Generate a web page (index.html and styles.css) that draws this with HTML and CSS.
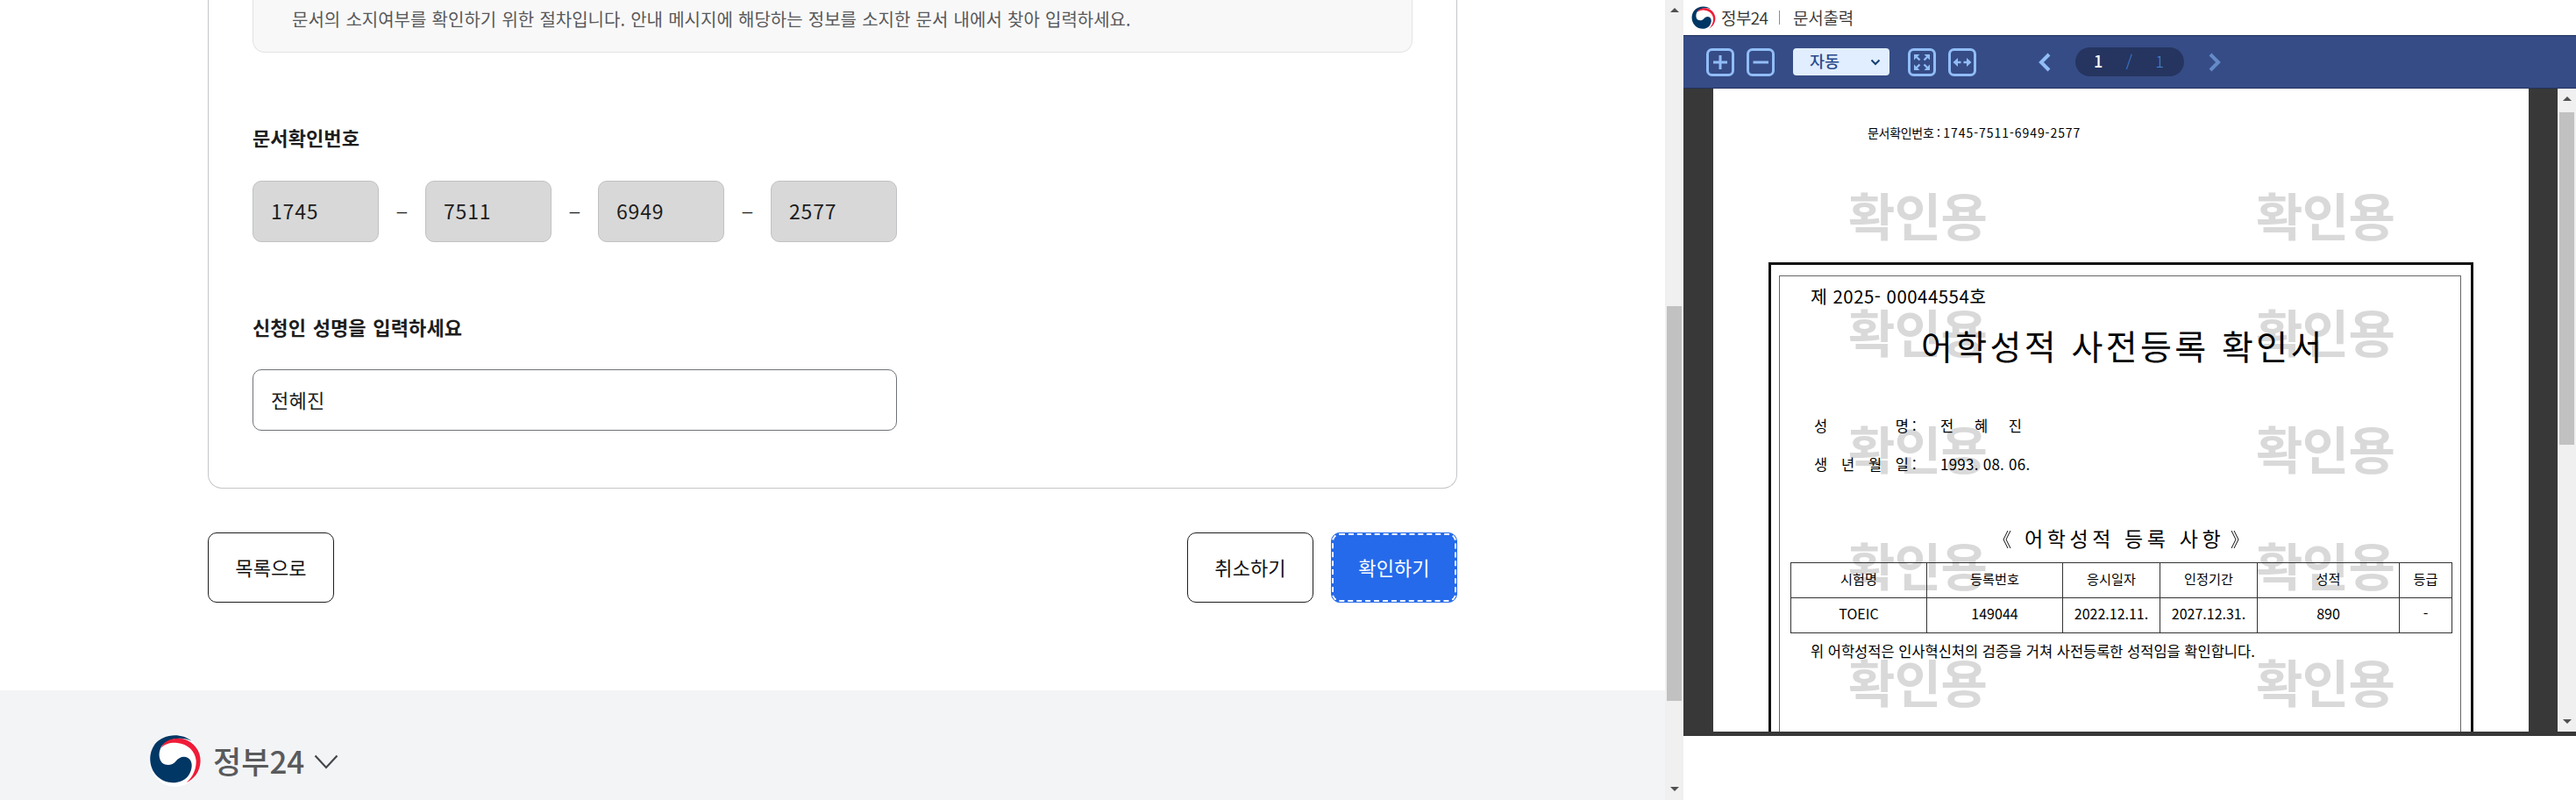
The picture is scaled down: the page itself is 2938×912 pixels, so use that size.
FILE: index.html
```html
<!DOCTYPE html>
<html lang="ko">
<head>
<meta charset="utf-8">
<title>정부24 문서출력</title>
<link rel="stylesheet" href="styles.css">
</head>
<body>
<svg class="defs" width="0" height="0" aria-hidden="true">
  <symbol id="gov-mark" viewBox="61 172 180 180">
    <circle cx="151" cy="262" r="89" fill="#fff"/>
    <path fill="#003764" d="M207 195C170 165 108 170 80 207C55 243 62 290 90 317C118 344 168 346 194 316C212 292 211 262 194 253C178 245 163 252 152 265C142 278 120 281 106 270C92 256 93 230 105 212C125 186 175 178 207 195Z"/>
    <path fill="#f01c38" d="M102 219C112 192 148 181 177 188C215 198 238 230 237 264C236 300 215 325 189 337C212 318 223 290 222 262C219 230 193 205 158 202C135 200 115 205 102 219Z"/>
  </symbol>
</svg>
<div class="screen">
  <div class="portal">
    <main class="portal-main">
      <section class="card">
        <p class="info">문서의 소지여부를 확인하기 위한 절차입니다. 안내 메시지에 해당하는 정보를 소지한 문서 내에서 찾아 입력하세요.</p>
        <h2 class="label">문서확인번호</h2>
        <div class="codes">
          <span class="field code">1745</span><span class="dash">–</span>
          <span class="field code">7511</span><span class="dash">–</span>
          <span class="field code">6949</span><span class="dash">–</span>
          <span class="field code">2577</span>
        </div>
        <h2 class="label label-name">신청인 성명을 입력하세요</h2>
        <div class="field name">전혜진</div>
      </section>
      <div class="actions">
        <button class="btn" type="button">목록으로</button>
        <div class="actions-right">
          <button class="btn" type="button">취소하기</button>
          <button class="btn primary" type="button">확인하기</button>
        </div>
      </div>
      <footer class="footer">
        <svg class="footer-mark"><use href="#gov-mark"/></svg>
        <span class="footer-name">정부24</span>
        <svg class="footer-chevron" viewBox="0 0 28 18"><path d="M1.5 1.5L14 15L26.500 1.500" fill="none" stroke="#444549" stroke-width="2.200"/></svg>
      </footer>
    </main>
    <div class="scrollbar main-scroll">
      <i class="arrow up"></i><i class="thumb"></i><i class="arrow down"></i>
    </div>
  </div>

  <div class="viewer">
    <header class="viewer-head">
      <svg class="head-mark"><use href="#gov-mark"/></svg>
      <span class="head-name">정부24</span>
      <span class="head-sep"></span>
      <span class="head-title">문서출력</span>
    </header>
    <div class="toolbar">
      <svg class="tool" viewBox="0 0 32 32"><rect class="tool-box" x="1.500" y="1.500" width="29" height="29" rx="5"/><path class="tool-line" d="M16 8V24M8 16H24"/></svg>
      <svg class="tool" viewBox="0 0 32 32"><rect class="tool-box" x="1.500" y="1.500" width="29" height="29" rx="5"/><path class="tool-line" d="M7.500 16H25"/></svg>
      <div class="zoom-select">
        <span>자동</span>
        <svg width="12" height="8" viewBox="0 0 12 8"><path d="M1.500 1.500L6 6L10.500 1.500" fill="none" stroke="#173f73" stroke-width="2"/></svg>
      </div>
      <svg class="tool" viewBox="0 0 32 32"><rect class="tool-box" x="1.500" y="1.500" width="29" height="29" rx="5"/><path class="tool-fill" d="M7 7H13.500L7 13.500ZM25 7V13.500L18.500 7ZM7 25V18.500L13.500 25ZM25 25H18.500L25 18.500Z"/><path class="tool-thin" d="M9 9L13.500 13.500M23 9L18.500 13.500M9 23L13.500 18.500M23 23L18.500 18.500"/></svg>
      <svg class="tool tool-fit" viewBox="0 0 32 32"><rect class="tool-box" x="1.500" y="1.500" width="29" height="29" rx="5"/><path class="tool-fill" d="M5.500 16L11 11V21ZM26.500 16L21 11V21Z"/><path class="tool-thin" d="M10 16H14.500M17.500 16H22"/></svg>
      <svg class="pager-arrow" viewBox="0 0 14 22"><path d="M12 2L3 11L12 20" fill="none" stroke="#91bdf7" stroke-width="4"/></svg>
      <div class="pager"><b>1</b><span>/</span><span>1</span></div>
      <svg class="pager-arrow" viewBox="0 0 14 22"><path d="M2 2L11 11L2 20" fill="none" stroke="#648bc7" stroke-width="4"/></svg>
    </div>
    <div class="canvas">
      <article class="page">
        <div class="marks">
          <span>확인용</span><span>확인용</span>
          <span>확인용</span><span>확인용</span>
          <span>확인용</span><span>확인용</span>
          <span>확인용</span><span>확인용</span>
          <span>확인용</span><span>확인용</span>
        </div>
        <p class="doc-no">문서확인번호 : <span>1745-7511-6949-2577</span></p>
        <div class="frame">
          <div class="frame-inner">
            <p class="serial">제 2025- 00044554호</p>
            <h1 class="doc-title">어학성적 사전등록 확인서</h1>
            <dl class="person">
              <dt><span>성</span><span>명</span></dt><dd class="colon">:</dd><dd class="person-name"><span>전</span><span>혜</span><span>진</span></dd>
              <dt><span>생</span><span>년</span><span>월</span><span>일</span></dt><dd class="colon">:</dd><dd class="birth">1993. 08. 06.</dd>
            </dl>
            <h3 class="subtitle"><svg class="bracket" viewBox="0 0 10 22"><path d="M6 1L1 11L6 21M9 1L4 11L9 21"/></svg><span>어학성적 등록 사항</span><svg class="bracket" viewBox="0 0 10 22"><path d="M1 1L6 11L1 21M4 1L9 11L4 21"/></svg></h3>
            <table class="scores">
              <colgroup><col class="c-test"><col class="c-no"><col class="c-date"><col class="c-term"><col class="c-score"><col class="c-grade"></colgroup>
              <tr><th>시험명</th><th>등록번호</th><th>응시일자</th><th>인정기간</th><th>성적</th><th>등급</th></tr>
              <tr><td>TOEIC</td><td>149044</td><td>2022.12.11.</td><td>2027.12.31.</td><td>890</td><td>-</td></tr>
            </table>
            <p class="statement">위 어학성적은 인사혁신처의 검증을 거쳐 사전등록한 성적임을 확인합니다.</p>
          </div>
        </div>
      </article>
      <div class="scrollbar doc-scroll">
        <i class="arrow up"></i><i class="thumb"></i><i class="arrow down"></i>
      </div>
    </div>
  </div>
</div>
</body>
</html>
```

FILE: styles.css
```css
* { box-sizing: border-box; margin: 0; padding: 0; }
body {
  width: 2938px;
  height: 912px;
  overflow: hidden;
  background: #fff;
  color: #1d1d1d;
  font-family: "Noto Sans CJK KR", "Noto Sans", sans-serif;
  white-space: nowrap;
}
svg { display: block; flex: none; }
.defs { position: absolute; }
.screen { display: flex; width: 2938px; height: 912px; }

/* portal */
.portal { display: flex; width: 1920px; height: 912px; }
.portal-main { display: flex; flex-direction: column; width: 1899px; }
.card {
  width: 1425px;
  height: 557px;
  margin-left: 237px;
  padding: 0 50px;
  border: 1px solid #c4c6c9;
  border-top: 0;
  border-radius: 0 0 16px 16px;
}
.info {
  height: 60px;
  padding: 10px 0 0 44px;
  border: 1px solid #e2e3e5;
  border-top: 0;
  border-radius: 0 0 14px 14px;
  background: #f8f8f8;
  color: #58595b;
  font-size: 20px;
  line-height: 24px;
  word-spacing: 0.6px;
}
.label {
  margin: 81px 0 35px;
  font-size: 22px;
  line-height: 30px;
  font-weight: 700;
  letter-spacing: 0.1px;
  word-spacing: 1.4px;
}
.label-name { margin-bottom: 34px; }
.codes { display: flex; width: 735px; }
.field {
  height: 70px;
  padding-left: 20px;
  border: 1px solid #6f7276;
  border-radius: 10px;
  font-size: 22px;
  line-height: 67px;
  letter-spacing: 0.2px;
}
.name { width: 735px; }
.code {
  width: 144px;
  border-color: #c0c1c3;
  background: #d8d8d8;
  font-size: 23px;
  line-height: 66px;
  letter-spacing: 0.8px;
}
.dash { width: 53px; text-align: center; font-size: 26px; font-weight: 300; line-height: 66px; }
.actions {
  display: flex;
  justify-content: space-between;
  width: 1425px;
  margin: 50px 0 100px 237px;
}
.actions-right { display: flex; gap: 20px; }
.btn {
  width: 144px;
  height: 80px;
  padding-bottom: 2px;
  border: 1px solid #1d1d1d;
  border-radius: 10px;
  background: #fff;
  color: #111;
  font-family: inherit;
  font-size: 22px;
  letter-spacing: 0.1px;
}
.primary {
  border-color: #256aea;
  background: #256aea;
  color: #fff;
  outline: 2px dashed #fff;
  outline-offset: -3px;
}
.footer {
  display: flex;
  height: 125px;
  padding: 50px 0 0 170px;
  background: #f2f4f6;
}
.footer-mark { width: 60px; height: 60px; }
.footer-name {
  width: 114px;
  margin-left: 13px;
  margin-right: 1px;
  color: #595a5c;
  font-size: 35px;
  font-weight: 500;
  line-height: 59px;
  letter-spacing: 0;
}
.footer-chevron { width: 28px; height: 18px; margin-top: 23px; }

/* scrollbars */
.scrollbar {
  display: flex;
  flex-direction: column;
  align-items: center;
  width: 21px;
  background: #f0f0f0;
}
.arrow { width: 0; height: 0; border: 5px solid transparent; }
.up { border-top: 0; border-bottom-color: #505050; }
.down { border-bottom: 0; border-top-color: #505050; margin-top: auto; }
.thumb { width: 17px; background: #c1c1c1; }
.main-scroll { height: 912px; padding: 9px 0 10px; }
.main-scroll .thumb { height: 450px; margin-top: 335px; }
.doc-scroll { height: 733px; padding: 9px 0; }
.doc-scroll .thumb { height: 379px; margin-top: 13px; }

/* viewer */
.viewer { width: 1018px; }
.viewer-head {
  display: flex;
  align-items: center;
  height: 40px;
  padding-left: 9px;
  color: #333;
  line-height: 24px;
}
.head-mark { width: 28px; height: 28px; margin-top: 1px; }
.head-name { width: 66px; margin-left: 6px; font-size: 19px; font-weight: 350; letter-spacing: -0.6px; }
.head-sep { width: 1px; height: 16px; background: #8d8d8d; }
.head-title { margin-left: 15px; font-size: 19px; font-weight: 350; letter-spacing: -0.2px; }
.toolbar {
  display: flex;
  align-items: center;
  height: 61px;
  padding-left: 26px;
  border-top: 1px solid #22325c;
  border-bottom: 1px solid #22325c;
  background: #364c86;
}
.tool { width: 32px; height: 32px; margin-right: 14px; }
.tool-box { fill: none; stroke: #91bdf7; stroke-width: 3; }
.tool-line { fill: none; stroke: #91bdf7; stroke-width: 3; }
.tool-thin { fill: none; stroke: #91bdf7; stroke-width: 2.4; }
.tool-fill { fill: #91bdf7; }
.zoom-select {
  display: flex;
  align-items: center;
  justify-content: space-between;
  width: 110px;
  height: 31px;
  margin: 0 21px 0 7px;
  padding: 0 10px 0 19px;
  border-radius: 4px;
  background: #e1eeff;
  color: #2d4a8a;
  font-size: 18.5px;
  font-weight: 500;
  line-height: 28px;
}
.zoom-select span { height: 31px; }
.tool-fit { margin-right: 71px; }
.pager-arrow { width: 14px; height: 22px; }
.pager {
  display: flex;
  justify-content: space-between;
  width: 124px;
  height: 33px;
  margin: 0 28px;
  padding: 0 23px 0 21px;
  border-radius: 17px;
  background: #253560;
  color: #4285dc;
  font-size: 18px;
  font-weight: 300;
  line-height: 30px;
}
.pager b { color: #fff; font-weight: 500; }
.canvas {
  display: flex;
  justify-content: space-between;
  height: 738px;
  padding: 0 0 5px 34px;
  background: #383838;
}

/* document */
.page {
  position: relative;
  width: 930px;
  height: 733px;
  padding: 40px 0 0 63px;
  overflow: hidden;
  background: #fff;
  color: #000;
}
.marks {
  position: absolute;
  left: 154px;
  top: 79px;
  display: grid;
  grid-template-columns: 465px 160px;
  grid-auto-rows: 133px;
  color: #d9d9d9;
  font-size: 58px;
  font-weight: 700;
  line-height: 128px;
  letter-spacing: -0.6px;
}
.doc-no, .frame { position: relative; }
.doc-no {
  height: 158px;
  padding-left: 113px;
  font-size: 14px;
  line-height: 20px;
  letter-spacing: -0.3px;
}
.doc-no span { letter-spacing: 0.95px; }
.frame {
  width: 804px;
  height: 700px;
  padding: 12px 11px 0 9px;
  border: 3px solid #111;
}
.frame-inner { height: 700px; padding: 8px 12px 0; border: 1px solid #666; }
.serial { padding-left: 23px; font-size: 20.5px; line-height: 28px; letter-spacing: 0.45px; }
.doc-title {
  margin-top: 18px;
  padding-left: 149px;
  font-size: 39px;
  font-weight: 400;
  line-height: 48px;
  letter-spacing: 3.4px;
}
.person {
  display: grid;
  grid-template-columns: 108px 36px 102px;
  grid-auto-rows: 44px;
  margin: 46px 0 0 27px;
  font-size: 16.5px;
  line-height: 44px;
}
.person dt, .person-name { display: flex; justify-content: space-between; }
.colon { padding-left: 4px; }
.person-name { width: 93px; }
.birth { font-size: 17px; letter-spacing: 0.25px; }
.subtitle {
  display: flex;
  align-items: center;
  height: 30px;
  margin: 49px 0 0 242px;
  font-size: 23px;
  font-weight: 400;
  letter-spacing: 4.6px;
}
.bracket { width: 10px; height: 22px; fill: none; stroke: #111; stroke-width: 1; }
.subtitle span { width: 250px; padding-left: 15px; line-height: 26px; height: 30px; }
.scores {
  width: 754px;
  margin-top: 11px;
  border-collapse: collapse;
  table-layout: fixed;
  font-size: 16px;
}
.scores th, .scores td { height: 40px; border: 1px solid #333; text-align: center; font-weight: 400; line-height: 30px; }
.scores th { padding-bottom: 5px; font-size: 15.2px; }
.scores td { padding-bottom: 5px; }
.c-test, .c-no { width: 155px; }
.c-date, .c-term { width: 111px; }
.c-score { width: 162px; }
.c-grade { width: 60px; }
.statement { margin-top: 8px; padding-left: 23px; font-size: 16.5px; line-height: 24px; letter-spacing: -0.02px; }
```
